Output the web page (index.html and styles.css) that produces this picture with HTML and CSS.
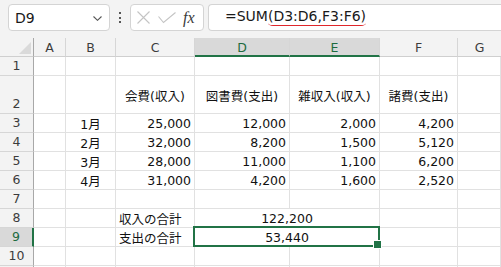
FILE: index.html
```html
<!DOCTYPE html>
<html>
    <head>
        <link rel="stylesheet" href="styles.css">
    </head>
    <body>
        <div class="toolbar">
            <div class="namebox">
                <span>D9</span>
                <svg class="chev" width="9" height="5" viewBox="0 0 9 5"><path d="M0.5 0.5 L4.5 4.3 L8.5 0.5" fill="none" stroke="#555" stroke-width="1.1"/></svg>
            </div>
            <div class="dots"><i></i><i></i><i></i></div>
            <div class="fxbox">
                <svg width="13" height="13" viewBox="0 0 13 13"><path d="M0.5 0.5 L12.5 12.5 M12.5 0.5 L0.5 12.5" stroke="#c4c4c4" stroke-width="1.1"/></svg>
                <svg width="18" height="12" viewBox="0 0 18 12"><path d="M0.5 4.5 L5.5 10.5 L17.5 0.5" fill="none" stroke="#c4c4c4" stroke-width="1.1"/></svg>
                <span class="fx">fx</span>
            </div>
            <div class="formula">=SUM<span class="args">(D3:D6,F3:F6)</span></div>
        </div>

        <div class="sheet">
            <div class="corner"><b></b></div>
            <div class="hd">A</div>
            <div class="hd">B</div>
            <div class="hd">C</div>
            <div class="hd sel">D</div>
            <div class="hd sel">E</div>
            <div class="hd">F</div>
            <div class="hd last">G</div>

            <div class="rh">1</div>
            <div class="c"></div><div class="c"></div><div class="c"></div><div class="c"></div><div class="c"></div><div class="c"></div><div class="c"></div>

            <div class="rh">2</div>
            <div class="c"></div><div class="c"></div>
            <div class="c ctr">会費(収入)</div>
            <div class="c ctr">図書費(支出)</div>
            <div class="c ctr">雑収入(収入)</div>
            <div class="c ctr">諸費(支出)</div>
            <div class="c"></div>

            <div class="rh">3</div>
            <div class="c"></div><div class="c ctr">1月</div>
            <div class="c num">25,000</div><div class="c num">12,000</div><div class="c num">2,000</div><div class="c num">4,200</div>
            <div class="c"></div>

            <div class="rh">4</div>
            <div class="c"></div><div class="c ctr">2月</div>
            <div class="c num">32,000</div><div class="c num">8,200</div><div class="c num">1,500</div><div class="c num">5,120</div>
            <div class="c"></div>

            <div class="rh">5</div>
            <div class="c"></div><div class="c ctr">3月</div>
            <div class="c num">28,000</div><div class="c num">11,000</div><div class="c num">1,100</div><div class="c num">6,200</div>
            <div class="c"></div>

            <div class="rh">6</div>
            <div class="c"></div><div class="c ctr">4月</div>
            <div class="c num">31,000</div><div class="c num">4,200</div><div class="c num">1,600</div><div class="c num">2,520</div>
            <div class="c"></div>

            <div class="rh">7</div>
            <div class="c"></div><div class="c"></div><div class="c"></div><div class="c"></div><div class="c"></div><div class="c"></div><div class="c"></div>

            <div class="rh">8</div>
            <div class="c"></div><div class="c"></div>
            <div class="c">収入の合計</div>
            <div class="c ctr wide">122,200</div>
            <div class="c"></div><div class="c"></div>

            <div class="rh sel">9</div>
            <div class="c"></div><div class="c"></div>
            <div class="c">支出の合計</div>
            <div class="c ctr wide active">53,440</div>
            <div class="c"></div><div class="c"></div>

            <div class="rh">10</div>
            <div class="c"></div><div class="c"></div><div class="c"></div><div class="c"></div><div class="c"></div><div class="c"></div><div class="c"></div>

            <div class="rh"></div>
            <div class="c"></div><div class="c"></div><div class="c"></div><div class="c"></div><div class="c"></div><div class="c"></div><div class="c"></div>
        </div>
    </body>
</html>
```

FILE: styles.css
```css
* {
    box-sizing: border-box;
}

body {
    margin: 0;
    background: #ffffff;
    font-family: "DejaVu Sans", "Noto Sans CJK JP", sans-serif;
    color: #111111;
    overflow: hidden;
}

.toolbar {
    display: flex;
    align-items: flex-start;
    height: 38px;
    padding: 4px 0 0 8px;
    background: #f3f3f3;
}

.namebox {
    display: flex;
    align-items: center;
    justify-content: space-between;
    width: 102px;
    height: 27px;
    padding: 0 7px 0 6px;
    background: #ffffff;
    border: 1px solid #d4d4d4;
    border-radius: 4px;
    font-size: 14px;
    color: #1a1a1a;
}

.chev {
    margin-top: 2px;
}

.dots {
    display: flex;
    flex-direction: column;
    align-items: center;
    gap: 2.5px;
    width: 20px;
    padding-top: 8px;
}

.dots i {
    width: 2px;
    height: 2px;
    background: #555555;
}

.fxbox {
    display: flex;
    align-items: center;
    width: 74px;
    height: 27px;
    padding: 0 0 0 6px;
    background: #ffffff;
    border: 1px solid #d4d4d4;
    border-radius: 4px;
}

.fxbox svg:nth-child(2) {
    margin-left: 8px;
}

.fx {
    margin-left: 7px;
    font-family: "Liberation Serif", serif;
    font-style: italic;
    font-size: 16px;
    color: #3a3a3a;
}

.formula {
    flex: 1;
    height: 27px;
    margin-left: 4px;
    padding: 3px 0 0 16px;
    background: #ffffff;
    border: 1px solid #d4d4d4;
    border-right: none;
    border-radius: 4px 0 0 4px;
    font-size: 14px;
    color: #1a1a1a;
    white-space: nowrap;
}

.args {
    padding-bottom: 1px;
    border-bottom: 1.5px solid #e0262b;
    border-radius: 0 0 5px 5px / 0 0 3px 3px;
}

.sheet {
    display: grid;
    grid-template-columns: 34px 32px 50px 79px 95px 90px 78px 1fr;
    grid-template-rows: 19px 19px 38px repeat(9, 19px);
    font-size: 12.5px;
}

.corner {
    display: flex;
    align-items: flex-end;
    justify-content: flex-end;
    padding: 0 2px 2px 0;
    background: #f3f3f3;
    border-right: 1px solid #a8a8a8;
    border-bottom: 1px solid #cfcfcf;
}

.corner b {
    width: 0;
    height: 0;
    border-left: 12px solid transparent;
    border-bottom: 12px solid #dadada;
}

.hd {
    display: flex;
    align-items: center;
    justify-content: center;
    padding-top: 1px;
    background: #f3f3f3;
    border-right: 1px solid #d6d6d6;
    border-bottom: 1px solid #cfcfcf;
    color: #3c3c3c;
}

.hd.sel {
    background: #d9d9d9;
    border-bottom: 2px solid #217346;
    color: #1d6b40;
}

.hd.last {
    border-right: none;
}

.rh {
    display: flex;
    align-items: flex-end;
    justify-content: center;
    padding-bottom: 2px;
    background: #f3f3f3;
    border-right: 1px solid #a8a8a8;
    border-bottom: 1px solid #d6d6d6;
    color: #3c3c3c;
}

.rh.sel {
    background: #d9d9d9;
    border-right: 2px solid #217346;
    color: #1d6b40;
}

.c {
    display: flex;
    align-items: center;
    padding: 1px 3px 0 3px;
    border-right: 1px solid #e1e1e1;
    border-bottom: 1px solid #e1e1e1;
    white-space: nowrap;
}

.num {
    justify-content: flex-end;
}

.ctr {
    justify-content: center;
}

.wide {
    grid-column: span 2;
}

.active {
    position: relative;
}

.active::after {
    content: "";
    position: absolute;
    top: -2px;
    left: -2px;
    right: -1px;
    bottom: -1px;
    border: 2px solid #217346;
}

.active::before {
    content: "";
    position: absolute;
    right: -3px;
    bottom: -3px;
    width: 7px;
    height: 7px;
    background: #217346;
    border: 1px solid #ffffff;
    z-index: 1;
}
```
